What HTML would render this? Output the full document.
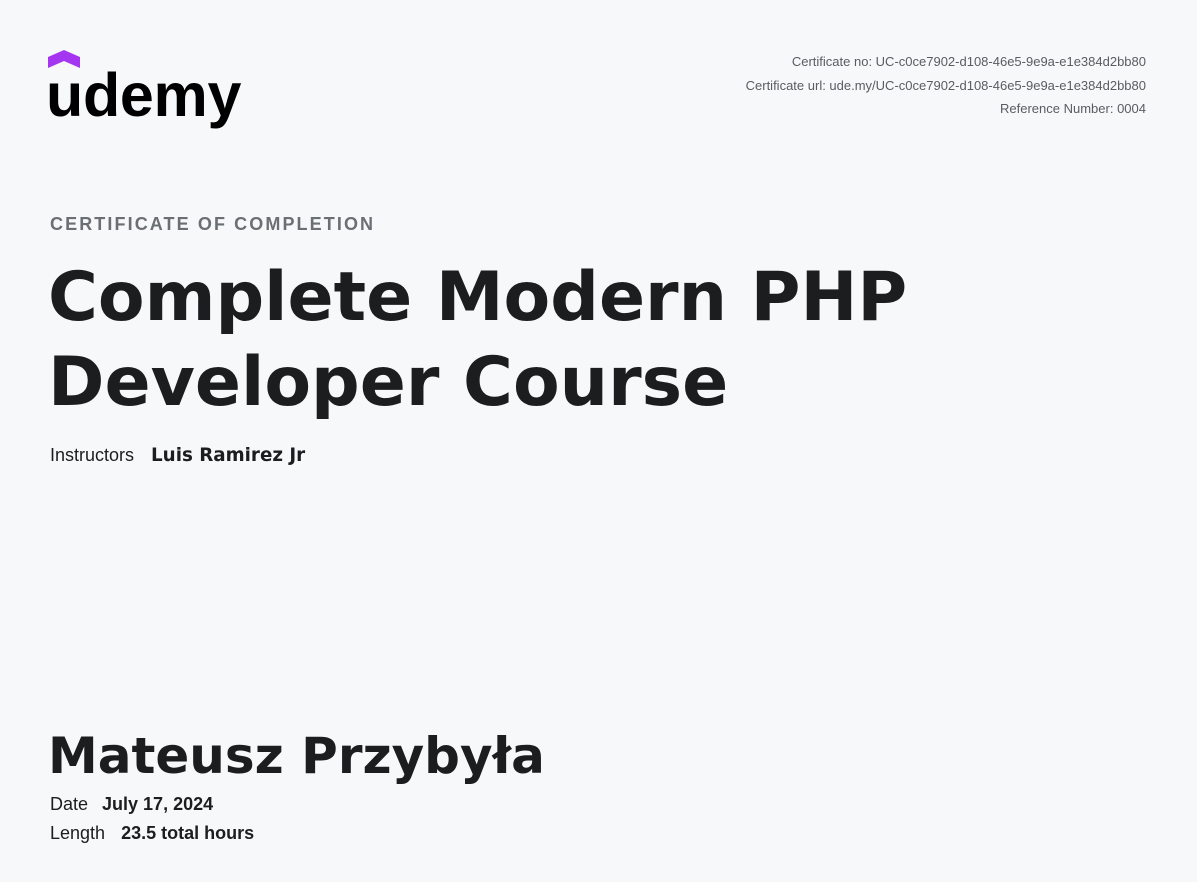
<!DOCTYPE html>
<html><head><meta charset="utf-8"><style>
body{margin:0;width:1197px;height:882px;background:#f7f8fa;position:relative;overflow:hidden;font-family:"Liberation Sans",sans-serif;color:#1c1d1f}
.a{position:absolute;white-space:nowrap}
.r{right:51px;font-size:13px;color:#5a5c60;text-align:right}
.dv{font-family:"DejaVu Sans",sans-serif;font-weight:bold}
</style></head><body>
<svg class="a" style="left:48px;top:50px" width="34" height="20" viewBox="0 0 34 20"><path d="M0 7 L16 0 L32 7 L32 18 L16 11 L0 18Z" fill="#a435f0"/></svg>
<div class="a" style="left:46px;top:60px;font-size:61px;font-weight:bold;letter-spacing:-0.3px;color:#000">udemy</div>
<div class="a r" style="top:54px">Certificate no: UC-c0ce7902-d108-46e5-9e9a-e1e384d2bb80</div>
<div class="a r" style="top:78px">Certificate url: ude.my/UC-c0ce7902-d108-46e5-9e9a-e1e384d2bb80</div>
<div class="a r" style="top:101px">Reference Number: 0004</div>
<div class="a" style="left:50px;top:214px;font-size:18px;font-weight:bold;letter-spacing:2.1px;color:#6a6f73">CERTIFICATE OF COMPLETION</div>
<div class="a dv" style="left:48px;top:255px;font-size:68px;line-height:85px">Complete Modern PHP<br>Developer Course</div>
<div class="a" style="left:50px;top:445px;font-size:18px">Instructors <span class="dv" style="font-size:18.3px;margin-left:12px">Luis Ramirez Jr</span></div>
<div class="a dv" style="left:48px;top:727px;font-size:50px">Mateusz Przybyła</div>
<div class="a" style="left:50px;top:794px;font-size:18px">Date <b style="margin-left:9px">July 17, 2024</b></div>
<div class="a" style="left:50px;top:823px;font-size:18px">Length <b style="margin-left:11px">23.5 total hours</b></div>
</body></html>
